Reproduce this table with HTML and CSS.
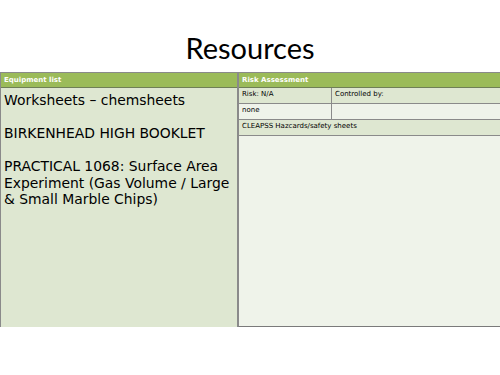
FILE: index.html
```html
<!DOCTYPE html>
<html>
<head>
<meta charset="utf-8">
<link rel="stylesheet" href="styles.css">
</head>
<body>
<div class="slide">
  <h1 class="title">Resources</h1>
  <div class="table">
    <div class="col left">
      <div class="hdr">Equipment list</div>
      <div class="equip">
        <p>Worksheets – chemsheets</p>
        <p>BIRKENHEAD HIGH BOOKLET</p>
        <p>PRACTICAL 1068: Surface Area Experiment (Gas Volume / Large &amp; Small Marble Chips)</p>
      </div>
    </div>
    <div class="col right">
      <div class="hdr">Risk Assessment</div>
      <div class="row dark">
        <div class="cell c1">Risk: N/A</div>
        <div class="cell c2">Controlled by:</div>
      </div>
      <div class="row light">
        <div class="cell c1">none</div>
        <div class="cell c2"></div>
      </div>
      <div class="row dark">
        <div class="cell">CLEAPSS Hazcards/safety sheets</div>
      </div>
      <div class="row light grow"></div>
    </div>
  </div>
</div>
</body>
</html>
```
FILE: styles.css
```css
html, body {
  margin: 0;
  padding: 0;
  background: #ffffff;
}
.slide {
  width: 500px;
  height: 375px;
  display: flex;
  flex-direction: column;
}
.title {
  margin: 0;
  height: 72px;
  box-sizing: border-box;
  padding-top: 30px;
  font-family: Lato, "Open Sans", sans-serif;
  font-weight: normal;
  font-size: 29px;
  line-height: 36px;
  text-align: center;
  color: #000;
}
.table {
  display: flex;
  height: 254px;
  border-top: 1px solid #8a8a8a;
}
.col {
  display: flex;
  flex-direction: column;
}
.left {
  width: 236px;
  background: #dee7d1;
  border-left: 1px solid #8a8a8a;
  border-right: 1px solid #8a8a8a;
}
.right {
  flex: 1;
  background: #eff3ea;
  border-left: 1px solid #8a8a8a;
  border-bottom: 1px solid #7a7a7a;
}
.hdr {
  height: 14px;
  background: #9bbb59;
  color: #ffffff;
  font-family: "DejaVu Sans", Verdana, sans-serif;
  font-weight: bold;
  font-size: 7px;
  line-height: 14px;
  padding-left: 3px;
  border-bottom: 1px solid #6f7f57;
}
.equip {
  padding: 4px 3px 0 3px;
  font-family: "DejaVu Sans", Verdana, sans-serif;
  font-size: 13.9px;
  line-height: 16.5px;
  color: #000;
}
.equip p {
  margin: 0 0 16.5px 0;
}
.row {
  display: flex;
  height: 15px;
  border-bottom: 1px solid #8a8a8a;
  font-family: "DejaVu Sans", Verdana, sans-serif;
  font-size: 7px;
  line-height: 11px;
  color: #000;
}
.dark { background: #dee7d1; }
.light { background: #eff3ea; }
.grow {
  flex: 1;
  border-bottom: none;
}
.cell {
  padding: 1px 3px;
}
.c1 {
  width: 86px;
  border-right: 1px solid #8a8a8a;
}
.c2 { flex: 1; }
```
